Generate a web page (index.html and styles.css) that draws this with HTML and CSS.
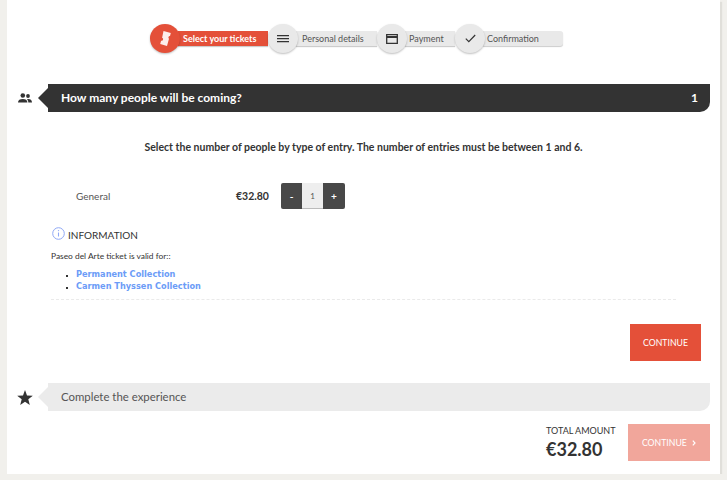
FILE: index.html
```html
<!DOCTYPE html>
<html lang="en">
<head>
    <meta charset="UTF-8">
    <title>Select your tickets</title>
    <link rel="stylesheet" href="styles.css">
</head>
<body>
    <div class="card">
        <div class="steps">
            <div class="step step-active">
                <span class="step-circle">
                    <svg width="11" height="15" viewBox="0 0 11 15"><path d="M3.500 0l7.300 2-.8 3a1.500 1.500 0 0 0-1 2.700L7 15 .2 13l.9-3.300a1.500 1.500 0 0 0 1-2.900z" fill="#fdeeeb"/></svg>
                </span>
                <span class="step-label">Select your tickets</span>
            </div>
            <div class="step step-personal">
                <span class="step-circle">
                    <svg width="12" height="8" viewBox="0 0 12 8"><path d="M0 .7h12M0 3.700h12M0 6.700h12" stroke="#333" stroke-width="1.200" fill="none"/></svg>
                </span>
                <span class="step-label">Personal details</span>
            </div>
            <div class="step step-payment">
                <span class="step-circle">
                    <svg width="12" height="10" viewBox="0 0 12 10"><path d="M.7.700h10.600v8.600H.7z" stroke="#333" stroke-width="1.300" fill="none"/><path d="M1 2h10v2H1z" fill="#333"/></svg>
                </span>
                <span class="step-label">Payment</span>
            </div>
            <div class="step step-last">
                <span class="step-circle">
                    <svg width="11" height="9" viewBox="0 0 11 9"><path d="M.8 4.700l3 3L10.200 1" stroke="#333" stroke-width="1.200" fill="none"/></svg>
                </span>
                <span class="step-label">Confirmation</span>
            </div>
        </div>

        <div class="section-head">
            <span class="section-icon">
                <svg width="14" height="10" viewBox="0 0 14 10"><circle cx="4.800" cy="2.500" r="2.300" fill="#333"/><circle cx="10" cy="3" r="1.900" fill="#333"/><path d="M0 9.500c0-2.500 2-3.500 4.800-3.500s4.600 1 4.600 3.500zM10.300 9.500c0-1.500-.4-2.500-1.300-3.300 2.800-.5 5 .6 5 3.300z" fill="#333"/></svg>
            </span>
            <div class="section-bar section-bar-dark">
                <span>How many people will be coming?</span>
                <span>1</span>
            </div>
        </div>

        <p class="intro">Select the number of people by type of entry. The number of entries must be between 1 and 6.</p>

        <div class="entry">
            <span class="entry-name">General</span>
            <span class="entry-price">€32.80</span>
            <div class="qty">
                <button class="qty-btn qty-minus">-</button>
                <span class="qty-value">1</span>
                <button class="qty-btn qty-plus">+</button>
            </div>
        </div>

        <div class="info">
            <div class="info-title">
                <svg width="13" height="13" viewBox="0 0 13 13"><circle cx="6.500" cy="6.500" r="5.800" fill="none" stroke="#8fa8f5" stroke-width="1"/><path d="M6.500 5.500v4" stroke="#8fa8f5" stroke-width="1.100"/><circle cx="6.500" cy="3.600" r=".7" fill="#8fa8f5"/></svg>
                <span>INFORMATION</span>
            </div>
            <p class="info-text">Paseo del Arte ticket is valid for::</p>
            <ul class="info-list">
                <li><a href="#">Permanent Collection</a></li>
                <li><a href="#">Carmen Thyssen Collection</a></li>
            </ul>
        </div>

        <div class="actions">
            <button class="btn-continue">CONTINUE</button>
        </div>

        <div class="section-head section-head-light">
            <span class="section-icon">
                <svg width="16" height="15" viewBox="0 0 16 15"><path d="M8 0l2 5.400 5.800.3-4.500 3.600 1.500 5.600L8 11.700l-4.800 3.200 1.500-5.600L.2 5.700 6 5.400z" fill="#333"/></svg>
            </span>
            <div class="section-bar section-bar-light">
                <span>Complete the experience</span>
            </div>
        </div>

        <div class="total-row">
            <div class="total">
                <span class="total-label">TOTAL AMOUNT</span>
                <span class="total-price">€32.80</span>
            </div>
            <button class="btn-next">
                CONTINUE
                <svg class="chevron" width="4" height="6" viewBox="0 0 4 6"><path d="M.8.600L3 3 .8 5.400" stroke="#fff" stroke-width="1.200" fill="none"/></svg>
            </button>
        </div>
    </div>
</body>
</html>
```
FILE: styles.css
```css
body {
    margin: 0;
    background-color: #f1f0ec;
    font-family: "Lato", "Noto Sans", sans-serif;
    color: #333;
    overflow: hidden;
}
.card {
    box-sizing: border-box;
    width: 713px;
    height: 474px;
    margin-left: 7px;
    padding-top: 24px;
    background-color: #fff;
    box-shadow: 2px 2px 1px #e0dfda;
}
.steps {
    display: flex;
    margin-left: 143px;
    height: 29px;
}
.step {
    display: flex;
    align-items: center;
    height: 29px;
}
.step-circle {
    display: flex;
    align-items: center;
    justify-content: center;
    width: 30px;
    height: 29px;
    border-radius: 50%;
    background-color: #e9e9e9;
    box-shadow: 0 1px 2px rgba(0, 0, 0, 0.25);
    position: relative;
    z-index: 1;
    flex-shrink: 0;
}
.step-label {
    display: flex;
    align-items: center;
    box-sizing: border-box;
    height: 15px;
    margin-left: -2px;
    padding-left: 6px;
    font-size: 9px;
    color: #555;
    background-color: #e9e9e9;
    box-shadow: 0 1px 1px rgba(0, 0, 0, 0.2);
}
.step-active .step-circle {
    background-color: #e45039;
}
.step-active .step-label {
    width: 90px;
    padding-left: 5px;
    font-weight: 700;
    color: #fff;
    background-color: #e45039;
}
.step-personal .step-label {
    width: 81px;
}
.step-payment .step-label {
    width: 50px;
    padding-left: 4px;
}
.step-last .step-label {
    width: 80px;
    padding-left: 4px;
    border-radius: 0 3px 3px 0;
}
.section-head {
    display: flex;
    align-items: center;
    margin-top: 31px;
    margin-right: 10px;
}
.section-icon {
    display: flex;
    justify-content: center;
    width: 36px;
    margin-right: 5px;
    flex-shrink: 0;
}
.section-bar {
    flex: 1;
    position: relative;
    display: flex;
    align-items: center;
    justify-content: space-between;
    height: 28px;
    padding: 0 12px 2px 13px;
    box-sizing: border-box;
    border-radius: 0 0 10px 0;
    font-size: 12px;
}
.section-bar::before {
    content: "";
    position: absolute;
    left: -10px;
    top: 4px;
    border-top: 10px solid transparent;
    border-bottom: 10px solid transparent;
    border-right: 10px solid #333;
}
.section-bar-dark {
    background-color: #333;
    color: #fff;
    font-weight: 700;
}
.section-bar-light {
    background-color: #ebebeb;
    color: #555;
    font-size: 11.400px;
}
.section-bar-light::before {
    border-right-color: #ebebeb;
}
.section-head-light {
    margin-top: 22px;
}
.intro {
    margin: 28px 0 0;
    text-align: center;
    font-size: 10.500px;
    font-weight: 700;
    line-height: 14px;
}
.entry {
    display: flex;
    align-items: center;
    margin-top: 29px;
    margin-left: 69px;
    height: 26px;
}
.entry-name {
    width: 160px;
    font-size: 10px;
    color: #555;
}
.entry-price {
    width: 45px;
    font-size: 10.500px;
    font-weight: 700;
}
.qty {
    display: flex;
    height: 26px;
}
.qty-btn {
    width: 21px;
    padding: 0;
    border: none;
    background-color: #484848;
    color: #fff;
    font-size: 10px;
    font-weight: 700;
    font-family: inherit;
}
.qty-minus {
    border-radius: 2px 0 0 2px;
}
.qty-plus {
    width: 22px;
    border-radius: 0 2px 2px 0;
}
.qty-value {
    display: flex;
    align-items: center;
    justify-content: center;
    box-sizing: border-box;
    width: 21px;
    background-color: #eee;
    border-bottom: 1px solid #bbb;
    font-size: 8px;
    color: #555;
}
.info {
    margin: 19px 44px 0 44px;
    padding-bottom: 7px;
    border-bottom: 1px dashed #eaeaea;
}
.info-title {
    display: flex;
    align-items: center;
    gap: 3px;
    margin-left: 1px;
    font-size: 10px;
    height: 14px;
}
.info-title svg {
    position: relative;
    top: -2px;
}
.info-text {
    margin: 8px 0 0;
    font-size: 8.400px;
    line-height: 12px;
}
.info-list {
    margin: 6px 0 0;
    padding-left: 25px;
    list-style: square;
    font-size: 8.200px;
}
.info-list li {
    height: 12px;
    line-height: 12px;
}
.info-list li::marker {
    font-size: 5px;
}
.info-list a {
    font-family: "DejaVu Sans", sans-serif;
    font-weight: 700;
    color: #6c9cf7;
    text-decoration: none;
}
.actions {
    display: flex;
    justify-content: flex-end;
    margin-top: 24px;
    margin-right: 19px;
}
.btn-continue {
    width: 71px;
    height: 37px;
    border: none;
    background-color: #e45039;
    color: #fff;
    font-size: 8.700px;
    font-family: inherit;
}
.total-row {
    display: flex;
    justify-content: flex-end;
    align-items: center;
    gap: 12px;
    margin-top: 13px;
    margin-right: 10px;
}
.total {
    display: flex;
    flex-direction: column;
    width: 70px;
}
.total-label {
    font-size: 9px;
    line-height: 12px;
}
.total-price {
    font-size: 18px;
    font-weight: 700;
    line-height: 24px;
}
.btn-next {
    width: 82px;
    height: 37px;
    border: none;
    background-color: #f1a69b;
    color: #fff;
    font-size: 8.700px;
    font-family: inherit;
}
.chevron {
    margin-left: 3px;
}
```
